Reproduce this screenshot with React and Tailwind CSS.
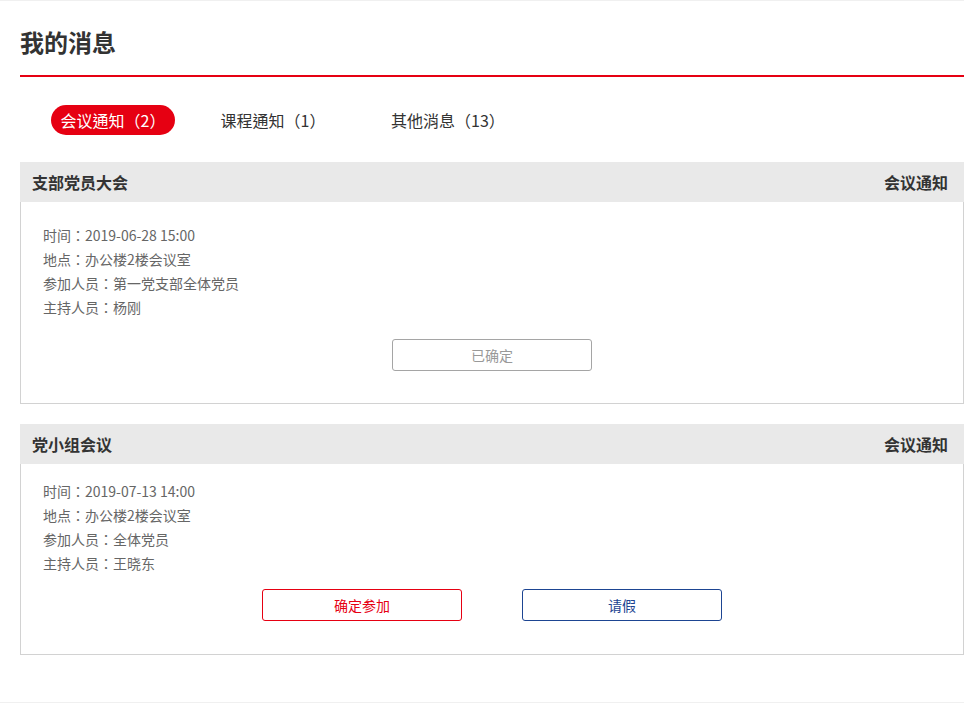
import React, { useState } from 'react'

const tabs = [
  { key: 'meeting', label: '会议通知（2）', cls: 'w-[124px]' },
  { key: 'course', label: '课程通知（1）', cls: 'w-[124px] ml-[36px]' },
  { key: 'other', label: '其他消息（13）', cls: 'w-[134px] ml-[46px]' },
]

const meetings = [
  {
    id: 1,
    title: '支部党员大会',
    type: '会议通知',
    time: '2019-06-28 15:00',
    place: '办公楼2楼会议室',
    members: '第一党支部全体党员',
    host: '杨刚',
    confirmed: true,
  },
  {
    id: 2,
    title: '党小组会议',
    type: '会议通知',
    time: '2019-07-13 14:00',
    place: '办公楼2楼会议室',
    members: '全体党员',
    host: '王晓东',
    confirmed: false,
  },
]

// centred full-width punctuation, like the reference font
const cjkCentered = { fontFamily: '"Noto Sans CJK TC", "Noto Sans CJK SC", sans-serif' }

function Row({ label, value }) {
  return (
    <div>
      {label}<span style={cjkCentered}>：</span>{value}
    </div>
  )
}

function MeetingCard({ m }) {
  return (
    <div className="mb-5">
      <div className="h-10 bg-[#e9e9e9] flex items-center justify-between pl-3 pr-4 text-base font-bold text-[#333]">
        <span>{m.title}</span>
        <span>{m.type}</span>
      </div>
      <div
        className={
          'border border-t-0 border-[#d2d2d2] px-[22px] ' +
          (m.confirmed ? 'pt-[21px] pb-[32px]' : 'pt-[15px] pb-[33px]')
        }
      >
        <div className="text-sm leading-6 text-[#666]">
          <Row label="时间" value={m.time} />
          <Row label="地点" value={m.place} />
          <Row label="参加人员" value={m.members} />
          <Row label="主持人员" value={m.host} />
        </div>
        {m.confirmed ? (
          <div className="flex justify-center mt-5">
            <button className="w-[200px] h-8 border border-[#a5a5a5] rounded-[3px] text-sm text-[#999] bg-white">
              已确定
            </button>
          </div>
        ) : (
          <div className="flex justify-center gap-[60px] mt-[14px]">
            <button className="w-[200px] h-8 border border-[#e60012] rounded-[3px] text-sm text-[#e60012] bg-white">
              确定参加
            </button>
            <button className="w-[200px] h-8 border border-[#1d4592] rounded-[3px] text-sm text-[#1d4592] bg-white">
              请假
            </button>
          </div>
        )}
      </div>
    </div>
  )
}

export default function App() {
  const [active, setActive] = useState('meeting')

  return (
    <div
      className="w-[964px] h-[703px] bg-white border-t border-b border-[#f0f0f0] overflow-hidden"
      style={{ fontFamily: '"Noto Sans CJK SC", "Noto Sans", sans-serif' }}
    >
      <div className="pl-5">
        <div className="h-[76px] pt-2 flex items-center border-b-2 border-[#e60012]">
          <h1 className="text-2xl font-bold text-[#333] leading-none">我的消息</h1>
        </div>

        <div className="flex items-center pl-[31px] pt-[28px] pb-[27px]">
          {tabs.map(t => (
            <button
              key={t.key}
              onClick={() => setActive(t.key)}
              style={cjkCentered}
              className={
                'h-[30px] rounded-full text-base leading-none ' + t.cls + ' ' +
                (active === t.key ? 'bg-[#e60012] text-white' : 'bg-transparent text-[#333]')
              }
            >
              {t.label}
            </button>
          ))}
        </div>

        {meetings.map(m => <MeetingCard key={m.id} m={m} />)}
      </div>
    </div>
  )
}
